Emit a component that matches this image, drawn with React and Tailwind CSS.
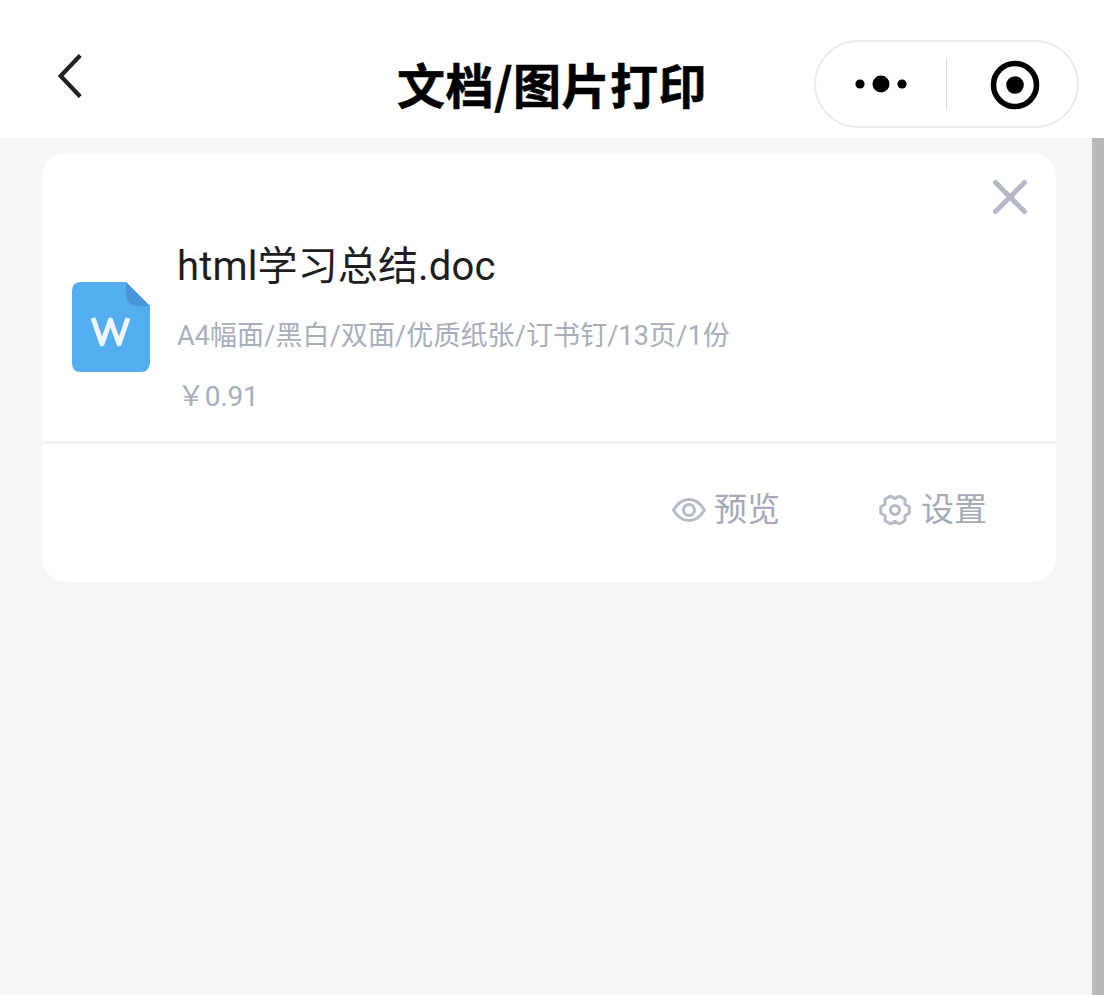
const cjk = '"Noto Sans CJK SC", sans-serif';
const stack = 'Roboto, "Noto Sans CJK SC", sans-serif';

const gearPoints = [0, 60, 120, 180, 240, 300]
  .flatMap((a) => [
    [a - 13, 14.6],
    [a + 13, 14.6],
    [a + 30, 11.4],
  ])
  .map(([deg, r]) => {
    const t = (deg * Math.PI) / 180;
    return `${(16 + r * Math.cos(t)).toFixed(2)},${(15 + r * Math.sin(t)).toFixed(2)}`;
  })
  .join(" ");

function Back() {
  return (
    <svg width="30" height="44" viewBox="0 0 30 44" fill="none" className="block">
      <path d="M25 3 L6 22 L25 41" stroke="#222" strokeWidth="4.4" strokeLinecap="square" strokeLinejoin="miter" transform="translate(1 0) scale(0.95 1)" />
    </svg>
  );
}

function More() {
  return (
    <svg width="52" height="18" viewBox="0 0 52 18" className="block">
      <circle cx="5" cy="9" r="4.6" fill="#000" />
      <circle cx="26" cy="9" r="8.5" fill="#000" />
      <circle cx="47" cy="9" r="4.6" fill="#000" />
    </svg>
  );
}

function Target() {
  return (
    <svg width="50" height="50" viewBox="0 0 50 50" className="block">
      <circle cx="25" cy="25" r="21.5" fill="none" stroke="#000" strokeWidth="5.6" />
      <circle cx="25" cy="25" r="8.8" fill="#000" />
    </svg>
  );
}

function Close() {
  return (
    <svg width="36" height="36" viewBox="0 0 36 36" className="block">
      <path d="M3.5 3.5 L32.5 32.5 M32.5 3.5 L3.5 32.5" stroke="#b3b9c8" strokeWidth="5" strokeLinecap="round" />
    </svg>
  );
}

function FileIcon() {
  return (
    <svg width="78" height="90" viewBox="0 0 78 90" className="block">
      <path d="M9 0 H54 L78 24 V80 Q78 90 68 90 H9 Q0 90 0 81 V9 Q0 0 9 0 Z" fill="#53aef0" />
      <path d="M54 0 L78 24 H66 Q54 24 54 12 Z" fill="#4795da" />
      <path d="M21 36 L30 62 L38.5 38 L47 62 L56 36" fill="none" stroke="#eef7fe" strokeWidth="5" strokeLinejoin="round" strokeLinecap="butt" />
    </svg>
  );
}

function Eye() {
  return (
    <svg width="34" height="24" viewBox="0 0 34 24" fill="none" className="block">
      <path d="M1.5 12 C6 4.5 11 1.5 17 1.5 C23 1.5 28 4.5 32.5 12 C28 19.5 23 22.5 17 22.5 C11 22.5 6 19.5 1.5 12 Z" stroke="#b4bac7" strokeWidth="3" />
      <circle cx="17" cy="12" r="5.5" stroke="#b4bac7" strokeWidth="3" />
    </svg>
  );
}

function Gear() {
  return (
    <svg width="32" height="30" viewBox="0 0 32 30" fill="none" className="block">
      <polygon points={gearPoints} stroke="#b4bac7" strokeWidth="3" strokeLinejoin="round" />
      <circle cx="16" cy="15" r="4.5" stroke="#b4bac7" strokeWidth="3" />
    </svg>
  );
}

export default function App() {
  return (
    <div className="w-[1104px] h-[995px] overflow-hidden flex flex-col bg-[#f6f6f6]" style={{ fontFamily: stack }}>
      <header className="h-[138px] shrink-0 bg-white relative">
        <div className="absolute left-[54px] top-[54px]"><Back /></div>
        <h1 className="absolute left-0 right-0 top-[53px] text-center text-[48px] leading-[60px] font-bold text-black tracking-[0.5px] [-webkit-text-stroke:0.6px_#000]" style={{ fontFamily: cjk }}>文档/图片打印</h1>
        <div className="absolute left-[814px] top-[40px] w-[265px] h-[88px] rounded-full border-2 border-[#ebebeb] bg-white flex items-center">
          <div className="w-[130px] flex justify-center"><More /></div>
          <div className="w-px h-[52px] bg-[#dedede]" />
          <div className="flex-1 flex justify-center pl-[5px] pt-[2px]"><Target /></div>
        </div>
      </header>
      <div className="flex-1 flex min-h-0">
        <main className="flex-1 pt-[15px] pl-[42px] pr-[36px]">
          <section className="bg-white rounded-[24px] h-[429px] flex flex-col">
            <div className="h-[288px] relative">
              <div className="absolute right-[28px] top-[26px]"><Close /></div>
              <div className="absolute left-[30px] top-[129px]"><FileIcon /></div>
              <div className="absolute left-[135px] top-0">
                <div className="mt-[88px] text-[40px] leading-[52px] text-[#1e1e1e] whitespace-nowrap tracking-[0.15px]">html学习总结.doc</div>
                <div className="mt-[26px] text-[27px] leading-[34px] text-[#a7aebc] whitespace-nowrap tracking-[0.1px]">A4幅面/黑白/双面/优质纸张/订书钉/13页/1份</div>
                <div className="mt-[26px] text-[28px] leading-[36px] text-[#a7aebc] whitespace-nowrap tracking-[-0.2px]">￥0.91</div>
              </div>
            </div>
            <div className="h-[3px] bg-[#f2f2f2]" />
            <div className="flex-1 flex items-start justify-end pt-[46px] pr-[69px] text-[33px] leading-[40px] text-[#a3aab9]">
              <div className="flex items-center gap-[8px]"><Eye /><span>预览</span></div>
              <div className="flex items-center gap-[10px] ml-[99px]"><Gear /><span>设置</span></div>
            </div>
          </section>
        </main>
        <div className="w-[12px] shrink-0 bg-[#b9b9b9]" />
      </div>
    </div>
  );
}
